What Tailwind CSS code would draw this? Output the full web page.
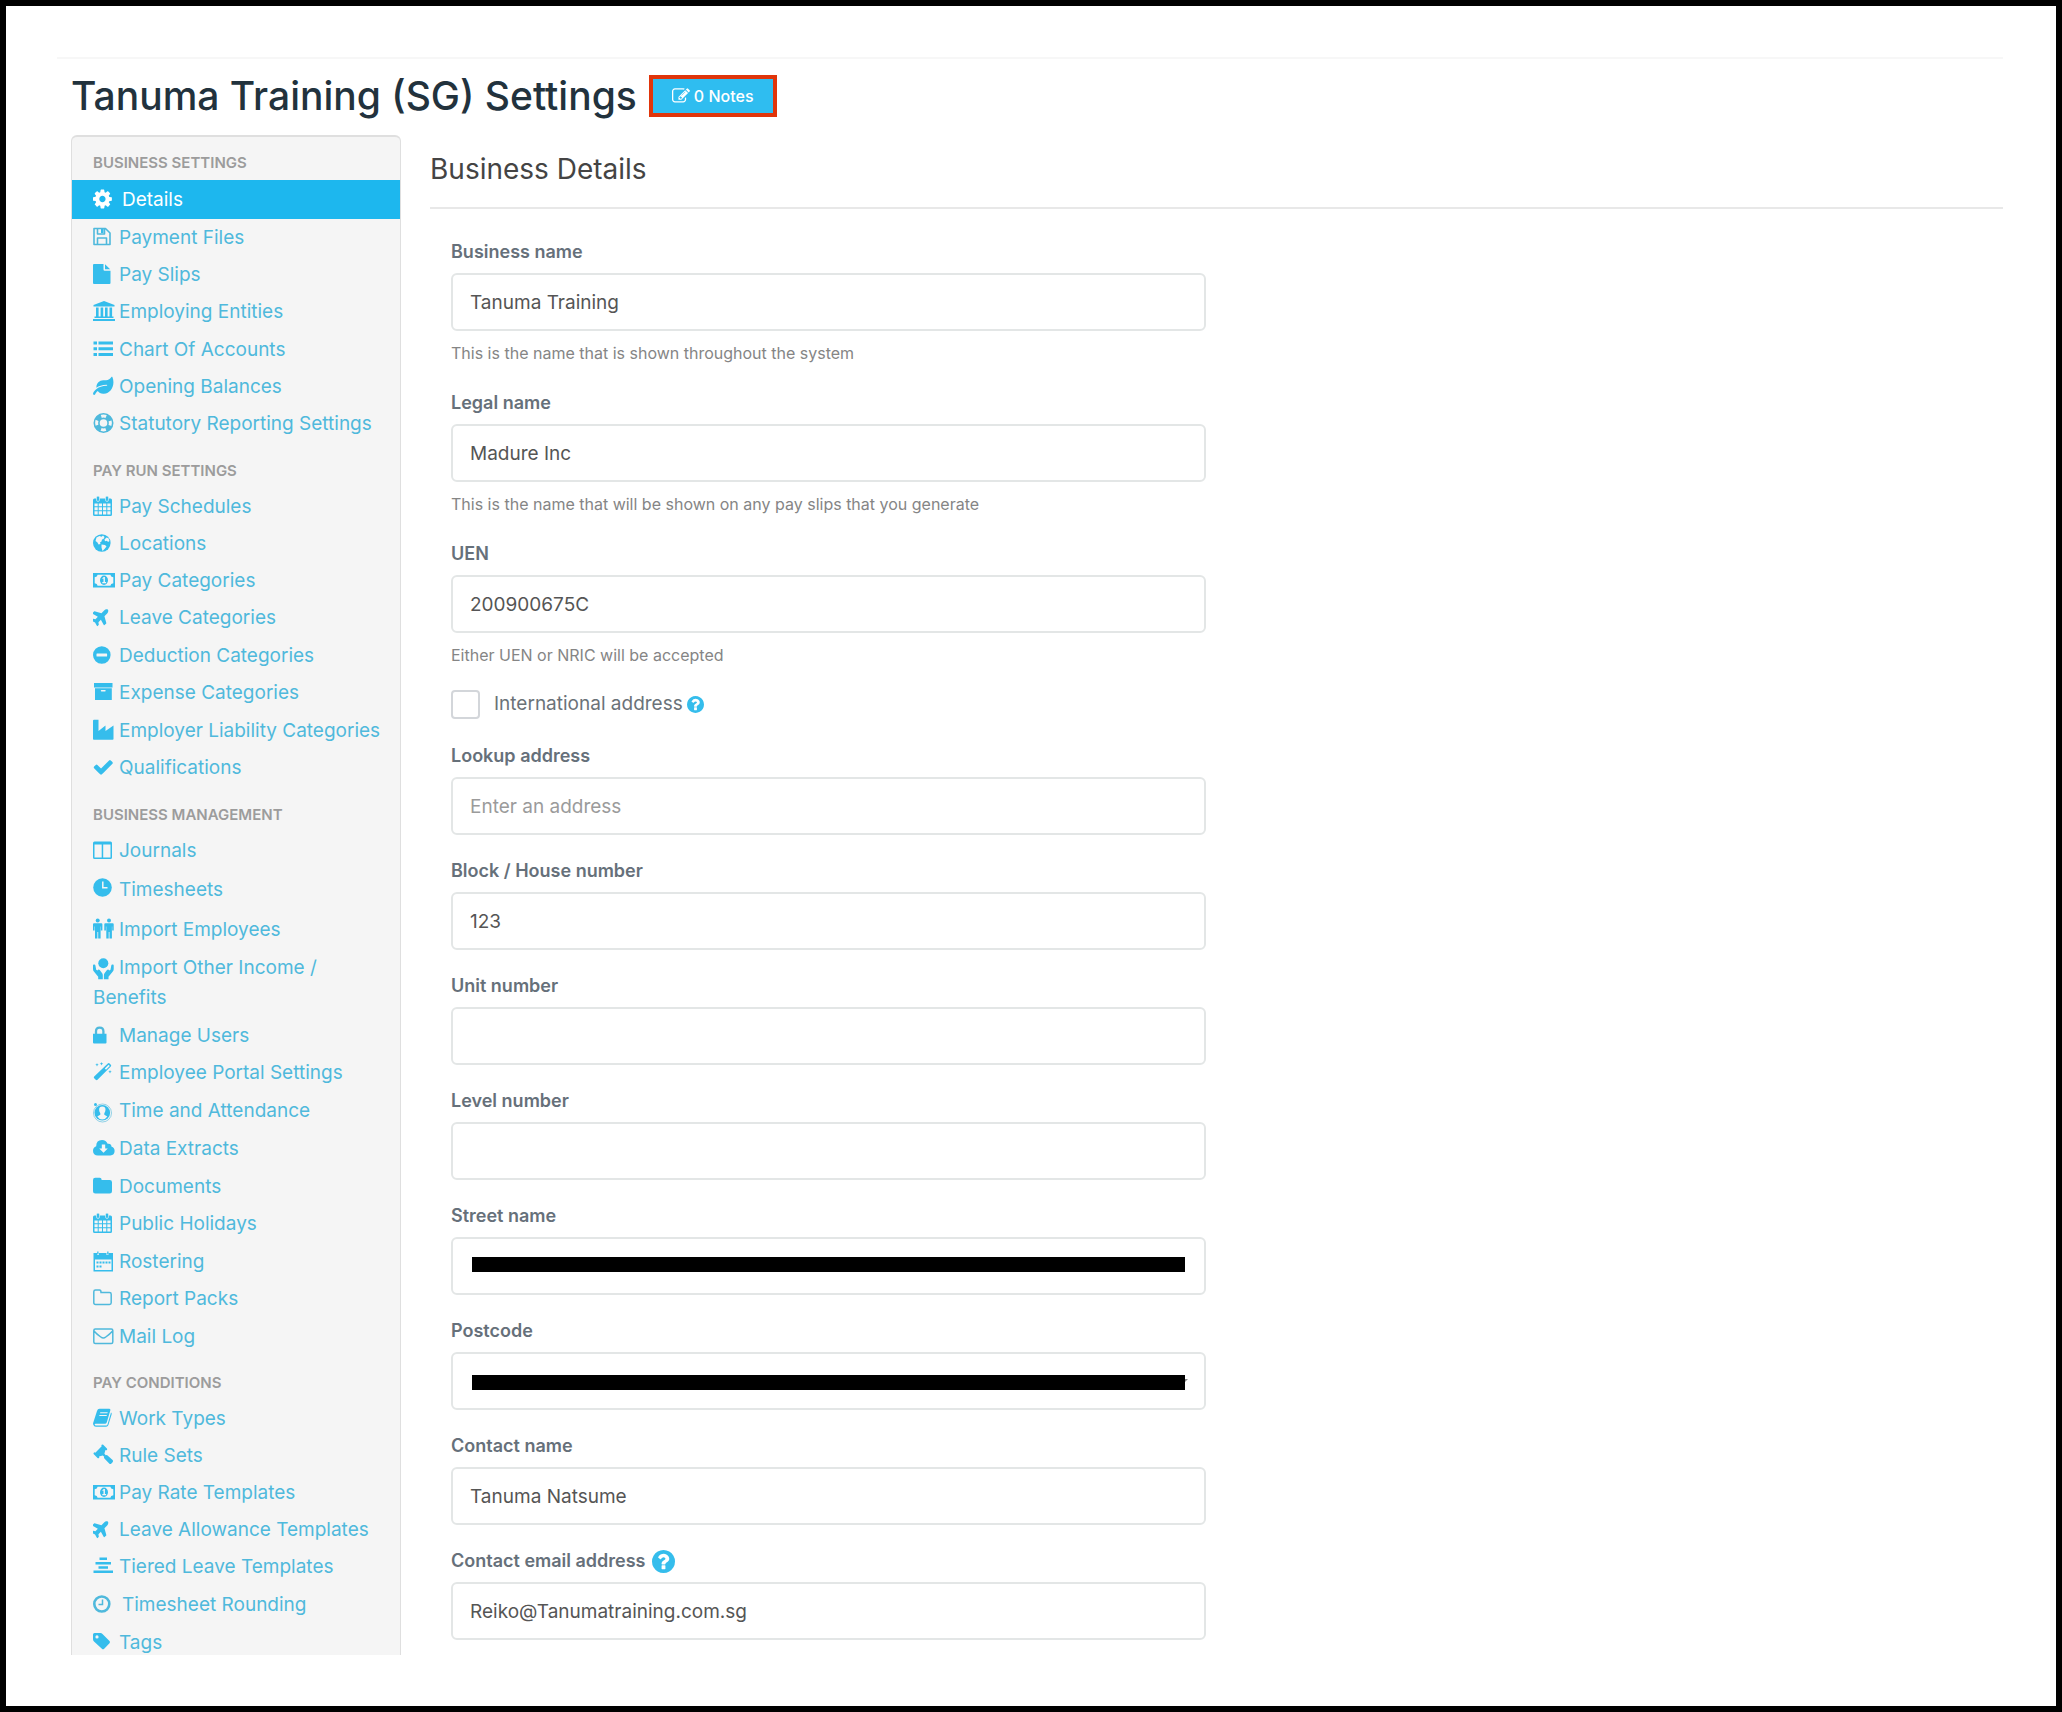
<!DOCTYPE html>
<html lang="en">
<head>
<meta charset="utf-8">
<meta name="viewport" content="width=device-width, initial-scale=1">
<title>Tanuma Training (SG) Settings</title>
<script src="https://cdn.jsdelivr.net/npm/@tailwindcss/browser@4"></script>
</head>
<body class="bg-white font-[Inter,sans-serif] text-[#555]">

<svg class="hidden" aria-hidden="true">
  <symbol id="cog" viewBox="128 0 1792 1792"><path d="M1152 896q0-106-75-181t-181-75-181 75-75 181 75 181 181 75 181-75 75-181zm512-109v222q0 12-8 23t-20 13l-185 28q-19 54-39 91 35 50 107 138 10 12 10 25t-9 23q-27 37-99 108t-94 71q-12 0-26-9l-138-108q-44 23-91 38-16 136-29 186-7 28-36 28h-222q-14 0-24.5-8.5t-11.5-21.5l-28-184q-49-16-90-37l-141 107q-10 9-25 9-14 0-25-11-126-114-165-168-7-10-7-23 0-12 8-23 15-21 51-66.5t54-70.5q-27-50-41-99l-183-27q-13-2-21-12.5t-8-23.5v-222q0-12 8-23t19-13l186-28q14-46 39-92-40-57-107-138-10-12-10-24 0-10 9-23 26-36 98.5-107.5t94.5-71.5q13 0 26 10l138 107q44-23 91-38 16-136 29-186 7-28 36-28h222q14 0 24.5 8.5t11.5 21.5l28 184q49 16 90 37l142-107q9-9 24-9 13 0 25 10 129 119 165 170 7 8 7 22 0 12-8 23-15 21-51 66.5t-54 70.5q26 50 41 98l183 28q13 2 21 12.5t8 23.5z"/></symbol>
  <symbol id="help" viewBox="128 128 1536 1536"><path d="M1024 1376v-192q0-14-9-23t-23-9h-192q-14 0-23 9t-9 23v192q0 14 9 23t23 9h192q14 0 23-9t9-23zm256-672q0-88-55.5-163t-138.5-116-170-41q-243 0-371 213-15 24 8 42l132 100q7 6 19 6 16 0 25-12 53-68 86-92 34-24 86-24 48 0 85.5 26t37.5 59q0 38-20 61t-68 45q-63 28-115.5 86.5t-52.5 125.5v36q0 14 9 23t23 9h192q14 0 23-9t9-23q0-19 21.5-49.5t54.5-49.5q32-18 49-28.5t46-35 44.5-48 28-60.5 12.5-81zm384 192q0 209-103 385.5t-279.5 279.5-385.5 103-385.5-103-279.5-279.5-103-385.5 103-385.5 279.5-279.5 385.5-103 385.5 103 279.5 279.5 103 385.5z"/></symbol>
  <symbol id="edit" viewBox="0 0 1792 1792"><path d="M888 1184l116-116-152-152-116 116v56h96v96h56zm440-720q-16-16-33 1l-350 350q-17 17-1 33t33-1l350-350q17-17 1-33zm80 594v190q0 119-84.5 203.5t-203.5 84.5h-832q-119 0-203.5-84.5t-84.5-203.5v-832q0-119 84.5-203.5t203.5-84.5h832q63 0 117 25 15 7 18 23 3 17-9 29l-49 49q-14 14-32 8-23-6-45-6h-832q-66 0-113 47t-47 113v832q0 66 47 113t113 47h832q66 0 113-47t47-113v-126q0-13 9-22l64-64q15-15 35-7t20 29zm-96-738l288 288-672 672h-288v-288zm444 132l-92 92-288-288 92-92q28-28 68-28t68 28l152 152q28 28 28 68t-28 68z"/></symbol>
  <symbol id="floppy" viewBox="0 0 22 22"><path fill="none" stroke="currentColor" stroke-width="1.6" stroke-linejoin="round" d="M1 2.500h11.500L17 7v11.500H1zM4.500 18.500v-6.500h9v6.500M4.500 2.500v5.500h7v-5.500"/><path d="M8 3h2.500v4H8z"/></symbol>
  <symbol id="file" viewBox="0 0 22 22"><path d="M1 1h9.500v5.500q0 1.200 1.200 1.200H17.500V20q0 1-1 1H1q-1 0-1-1V2q0-1 1-1zM12 1.300l5.200 5H12z"/></symbol>
  <symbol id="bank" viewBox="0 0 22 22"><path d="M11 1l10.500 4v1.400H.5V5zM3 7.500h2.600v9H3zM7.600 7.500h2.600v9H7.600zM12 7.500h2.600v9H12zM16.500 7.500h2.600v9h-2.600zM1.500 16.500h19v1.600h-19zM0 19h22v2H0z"/></symbol>
  <symbol id="list" viewBox="0 0 22 22"><path d="M.5 3.500H4v3H.5zM.5 9.200H4v3H.5zM.5 15H4v3H.5zM5.500 3.500H20v3H5.500zM5.500 9.200H20v3H5.500zM5.500 15H20v3H5.500z"/></symbol>
  <symbol id="leaf" viewBox="0 -50 620 620"><path d="M546.2 9.700c-5.600-12.500-21.600-13-28.300-1.200C486.900 62.400 431.400 96 368 96h-80C182 96 96 182 96 288c0 7 .8 13.700 1.500 20.500C161.300 262.800 253.400 224 384 224c8.800 0 16 7.200 16 16s-7.200 16-16 16C132.600 256 26 410.100 2.400 468c-6.600 16.300 1.200 34.900 17.500 41.600 16.400 6.800 35-1.100 41.800-17.300 1.500-3.600 20.900-47.900 71.900-90.600 32.400 43.900 94 85.800 174.900 77.200C465.500 467.500 576 326.700 576 154.300c0-50.200-10.800-102.200-29.800-144.600z"/></symbol>
  <symbol id="ring" viewBox="0 0 22 22"><g fill="none" stroke="currentColor"><circle cx="10.500" cy="11" r="9.200" stroke-width="1.600"/><circle cx="10.500" cy="11" r="4.600" stroke-width="1.600"/><circle cx="10.500" cy="11" r="7" stroke-width="4.500" stroke-dasharray="6 4.996" stroke-dashoffset="-2.500"/></g></symbol>
  <symbol id="calendar" viewBox="0 0 22 22"><path fill-rule="evenodd" d="M1.500 3.500h16q1.500 0 1.500 1.500v14.500q0 1.500-1.500 1.500h-16Q0 21 0 19.500V5Q0 3.500 1.500 3.500zM1.500 8.500v2.800h3.200V8.500zM5.700 8.500v2.800h3.300V8.500zM10 8.500v2.800h3.300V8.500zM14.300 8.500v2.800h3.200V8.500zM1.500 12.300v3h3.200v-3zM5.700 12.300v3h3.300v-3zM10 12.300v3h3.300v-3zM14.300 12.300v3h3.200v-3zM1.500 16.300v3.200h3.200v-3.200zM5.700 16.300v3.200h3.300v-3.200zM10 16.300v3.200h3.300v-3.200zM14.300 16.300v3.200h3.200v-3.200z"/><rect x="3.500" y="1" width="3" height="5.500" rx="1.500" stroke="#f5f5f5" stroke-width=".6"/><rect x="12.500" y="1" width="3" height="5.500" rx="1.500" stroke="#f5f5f5" stroke-width=".6"/></symbol>
  <symbol id="globe" viewBox="0 0 22 22"><circle cx="8.800" cy="11" r="8.800"/><path fill="#f5f5f5" d="M3.500 5.500l3-1.500 2 .8 1.500-1.300 1.500 1.500-1 2-1.500.5-.5 2-1.500 1 .5 1.500-2 .5-1-2-2-1.500zM11.500 7.500l2-2 2 .8 1 2.700-1.500 1-1-1.200-2 .5zM8.500 12.500l3.500.5 1.500 1.500-2 2.500-2 2-1-3.500z"/></symbol>
  <symbol id="money" viewBox="0 0 22 22"><path fill-rule="evenodd" d="M0 4h22v14.500H0zM4.600 5.800Q4.400 8 1.700 8.300v5.900q2.700.3 2.900 2.500h12.800q.2-2.200 2.900-2.500V8.300Q17.600 8 17.400 5.800z"/><ellipse cx="11" cy="11.200" rx="4" ry="4.700"/><path fill="#f5f5f5" d="M9.300 9.200L10.800 8h1.100v5h1.200v1.200H9.300V13h1.200V9.600l-.7.400z"/></symbol>
  <symbol id="plane" viewBox="0 0 22 22"><path transform="translate(8.100 10.500) rotate(-45) scale(.0335) translate(-288 -256)" d="M480 192H365.710L260.610 8.060A16.014 16.014 0 0 0 246.710 0h-65.500c-10.630 0-18.300 10.170-15.380 20.390L214.860 192H112l-43.200-57.600c-3.020-4.030-7.770-6.400-12.800-6.400H16.010C5.600 128-2.040 137.780.49 147.880L32 256 .49 364.120C-2.040 374.220 5.600 384 16.010 384H56c5.040 0 9.780-2.370 12.800-6.400L112 320h102.860l-49.030 171.600c-2.920 10.220 4.750 20.400 15.380 20.400h65.500c5.740 0 11.040-3.080 13.890-8.060L365.710 320H480c35.350 0 96-28.650 96-64s-60.650-64-96-64z"/></symbol>
  <symbol id="minus" viewBox="0 0 22 22"><path fill-rule="evenodd" d="M8.800 2.200a8.800 8.800 0 1 1 0 17.600 8.800 8.800 0 0 1 0-17.600zM4 9.500q-.5 0-.5.500v2q0 .5.500.5h9.600q.5 0 .5-.5v-2q0-.5-.5-.5z"/></symbol>
  <symbol id="archive" viewBox="0 0 22 22"><path fill-rule="evenodd" d="M1 2h18.500v4.500H1zM2 7.300h16.800V19H2zM8.500 9q-.7 0-.7.800t.7.800H12q.7 0 .7-.8T12 9z"/></symbol>
  <symbol id="industry" viewBox="0 0 22 22"><path d="M1 .8h4.500V12l7-5.500V12l8-5.500V20q0 .8-.8.800H.8Q0 20.800 0 20V1.800q0-1 1-1z"/></symbol>
  <symbol id="check" viewBox="60 0 1792 1792"><path d="M1671 566q0 40-28 68l-724 724-136 136q-28 28-68 28t-68-28l-136-136-362-362q-28-28-28-68t28-68l136-136q28-28 68-28t68 28l294 295 656-657q28-28 68-28t68 28l136 136q28 28 28 68z"/></symbol>
  <symbol id="columns" viewBox="0 0 22 22"><path fill-rule="evenodd" d="M1.500 2.500h16Q19 2.500 19 4v14.500q0 1.500-1.500 1.500h-16Q0 20 0 18.500V4q0-1.500 1.500-1.500zM1.500 5.500v13h7.200v-13zM10.200 5.500v13h7.300v-13z"/></symbol>
  <symbol id="clock" viewBox="0 0 22 22"><circle cx="9.500" cy="9.500" r="9.300"/><path fill="none" stroke="#f5f5f5" stroke-width="1.500" d="M9.800 3.500v6.300h4.700"/></symbol>
  <symbol id="people" viewBox="0 0 22 22"><circle cx="4.700" cy="2.600" r="2"/><path d="M1 5.200h7.400q1 0 1 1v6.300H7.900V8.500h-.3V20.500H5.200V14h-.8v6.500H2V8.500h-.4v4H0V6.200q0-1 1-1z"/><circle cx="16" cy="2.600" r="2"/><path d="M12.300 5.200h7.400q1 0 1 1v6.300h-1.500V8.500h-.3V20.500h-2.400V14h-.8v6.500h-2.400V8.500h-.4v4h-1.600V6.200q0-1 1-1z"/></symbol>
  <symbol id="hands" viewBox="0 0 22 22"><circle cx="10.300" cy="5.300" r="5"/><path d="M.8 6.500q1.400-.4 1.600 1l.8 4.300 1.300.8q.8-1.700 2.200-.6l2.300 3q.8 1 .8 2.200v4H5.200v-2.500L.9 13.500Q0 12.500 0 11V7.500q0-.8.800-1zM19.900 6.500q-1.400-.4-1.600 1l-.8 4.300-1.300.8q-.8-1.700-2.200-.6l-2.300 3q-.8 1-.8 2.200v4h4.600v-2.500l4.300-5.200q.9-1 .9-2.500V7.500q0-.8-.8-1z"/></symbol>
  <symbol id="lock" viewBox="0 0 22 22"><path d="M0 9.700h13.500v8.800q0 1-1 1H1q-1 0-1-1z"/><path fill="none" stroke="currentColor" stroke-width="2.300" d="M3 10V7.300q0-3.600 3.700-3.600t3.700 3.600V10"/></symbol>
  <symbol id="wand" viewBox="0 0 22 22"><path fill-rule="evenodd" d="M14.800 2.500q.9-.9 1.800 0l1.200 1.200q.9.900 0 1.800L4.500 18.800q-.9.900-1.800 0l-1.500-1.500q-.9-.9 0-1.800zM15.600 3.700l-3.800 3.800 1.200 1.200 3.800-3.800z"/><path d="M4 2l.5 1.200 1.200.5-1.200.5L4 5.400l-.5-1.200-1.200-.5 1.200-.5zM8.500 1l.5 1.300 1.300.5-1.300.5-.5 1.300-.5-1.300-1.300-.5 1.300-.5zM17 9l.5 1.200 1.200.5-1.200.5-.5 1.200-.5-1.200-1.200-.5 1.200-.5z"/></symbol>
  <symbol id="attend" viewBox="0 0 22 22"><circle cx="9.500" cy="12" r="9" fill="none" stroke="currentColor" stroke-width="1" opacity=".6"/><circle cx="9.300" cy="11.800" r="7.800"/><circle cx="2.500" cy="3.500" r="1.500"/><path fill="#f5f5f5" d="M9.300 5.500q3.200 0 3.200 3.300 0 2-1.200 3.400v1.600l3 1.700q-1.800 3-5 3t-5-3l3-1.700v-1.600Q6.100 10.800 6.100 8.800q0-3.300 3.200-3.300z"/></symbol>
  <symbol id="cloud" viewBox="0 0 22 22"><path fill-rule="evenodd" d="M5 18.500q-5-.3-5-4.800 0-3.200 3.200-4.500Q3.200 3 9 3q4.200 0 5.600 3.800 3.500-.8 4 3 3 .8 3 4.200 0 4.200-4.300 4.500zM8.800 7.500v4H6.200l4.300 4.300 4.300-4.300h-2.600v-4z"/></symbol>
  <symbol id="folder" viewBox="0 0 22 22"><path d="M2.200 2.800h4.600Q8.500 2.800 8.700 5h8q2.300 0 2.300 2.300v8.900q0 2.300-2.300 2.300H2.300Q0 18.500 0 16.200V5q0-2.200 2.200-2.200z"/></symbol>
  <symbol id="folder-o" viewBox="0 0 22 22"><path fill="none" stroke="currentColor" stroke-width="1.500" d="M2.500 3h4Q8 3 8 5.500h8.500q1.700 0 1.700 1.700v8.600q0 1.700-1.700 1.700h-14Q.8 17.500.8 15.800V4.700Q.8 3 2.500 3z"/></symbol>
  <symbol id="roster" viewBox="0 0 22 22"><path fill-rule="evenodd" d="M.5 3H4v2h2V3h7.500v2h2V3H20v18.500H.5zM2 9.500V20h16.500V9.500z"/><path d="M4.200 1.500h1.300v3H4.200zM14.200 1.500h1.300v3h-1.300zM6.500 11.500h2v2h-2zM9.500 11.500h2v2h-2zM12.500 11.500h2v2h-2zM15.500 11.500h2v2h-2zM3.500 15.500h2v2h-2zM6.500 15.500h2v2h-2zM3.500 11.500h2v2h-2z"/></symbol>
  <symbol id="mail" viewBox="0 0 22 22"><path fill="none" stroke="currentColor" stroke-width="1.500" d="M2.300 4h16q1.500 0 1.500 1.500V17q0 1.500-1.500 1.500h-16Q.8 18.500.8 17V5.500Q.8 4 2.300 4zM1 6q2.500 3 6.800 6 2.500 2 5 0 4.200-3 6.800-6"/></symbol>
  <symbol id="book" viewBox="0 0 22 22"><path fill-rule="evenodd" d="M6.500 1.800h9.600q1.600 0 1.200 1.600l-3.500 11.800q-.5 1.500-2 1.500H2.500q-1 0-.7 1t1.400.8h10q1 0 1.300-1L18 5.500q1 .5.600 2L15.400 18q-.6 1.700-2.300 1.700H3Q.8 19.700.2 17.500q-.3-1 .1-2L4 4q.6-2.200 2.500-2.200zM7.300 5.200L7 6.300h7.400l.3-1.100zM6.500 8l-.3 1.100h7.400l.3-1.100z"/></symbol>
  <symbol id="gavel" viewBox="0 0 22 22"><path d="M8.700.8q.8-.7 1.500 0l3.700 3.700q.7.800 0 1.500-.8.700-1.500 0l-1 3.800 1.400 1.400q1-.6 1.800.2l5 4.600q1 1 0 2.200l-1.200 1.400q-1 1-2.200 0l-4.800-5q-.8-.9-.2-1.800L9.800 11.400 6 12.400q.7.800 0 1.500-.8.700-1.500 0L.8 10.200q-.7-.8 0-1.500.8-.7 1.500 0L8.700 2.300q-.7-.7 0-1.500z"/></symbol>
  <symbol id="tiers" viewBox="0 0 22 22"><path d="M6.500 2.500H14v2.500H6.500zM2.500 7h15.500v2.500H2.500zM5.500 11.300h9.500v2.500H5.500zM.5 15.600H20V18H.5z"/></symbol>
  <symbol id="clock-o" viewBox="0 0 22 22"><circle cx="8.800" cy="11" r="7.500" fill="none" stroke="currentColor" stroke-width="2.600"/><path fill="none" stroke="currentColor" stroke-width="1.500" d="M9.500 6.500v5h-4"/></symbol>
  <symbol id="tag" viewBox="0 0 22 22"><path fill-rule="evenodd" d="M1.500 2H7.500q1 0 2 1l7 7q1 1 0 2.200l-5.300 5.500q-1.200 1-2.300 0L1 10.500Q0 9.500 0 8.300V3.500Q0 2 1.500 2zM4 4.300a1.600 1.600 0 1 0 0 3.200 1.600 1.600 0 0 0 0-3.200z"/></symbol>
</svg>

<div class="min-h-screen border-[6px] border-black py-[51px] pr-[53px] pl-[51px]">
  <div class="border-t-2 border-[#f7f7f7]"></div>
  <header class="flex items-center gap-3 pt-3 pl-[14px]">
    <h1 class="text-[39px] leading-[50px] font-medium text-[#22323d]">Tanuma Training (SG) Settings</h1>
    <button type="button" class="flex h-[42px] items-center gap-1 border-4 border-[#e0350b] bg-[#2fbdf0] px-[19px] text-[16px] font-medium text-white">
      <svg class="size-[18px] fill-current" aria-hidden="true"><use href="#edit"/></svg>0 Notes
    </button>
  </header>

  <div class="flex items-start gap-[29px] pt-[14px] pl-[14px]">
    <aside class="w-[330px] shrink-0 rounded-t-md border-x border-t-2 border-[#dfdfdf] bg-[#f5f5f5] text-[19px] text-[#4fb9dc]">
      <nav aria-label="Settings">
        <h2 class="h-[43px] pt-[9px] pl-[21px] text-[15px] leading-[34px] font-semibold text-[#9c9c9c]">BUSINESS SETTINGS</h2>
        <ul>
          <li class="h-[39px] bg-[#1db7ee] leading-[39px] text-white"><a href="#" class="block pr-5 pl-[21px]"><svg class="mr-[7px] inline-block size-[22px] fill-current align-[-4px]" aria-hidden="true"><use href="#cog"/></svg>Details</a></li>
          <li class="h-[37px] leading-[37px]"><a href="#" class="block pr-5 pl-[21px]"><svg class="mr-1 inline-block size-[22px] fill-[#35bdec] align-[-4px]" aria-hidden="true"><use href="#floppy"/></svg>Payment Files</a></li>
          <li class="h-[37px] leading-[37px]"><a href="#" class="block pr-5 pl-[21px]"><svg class="mr-1 inline-block size-[22px] fill-[#35bdec] align-[-4px]" aria-hidden="true"><use href="#file"/></svg>Pay Slips</a></li>
          <li class="h-[38px] leading-[38px]"><a href="#" class="block pr-5 pl-[21px]"><svg class="mr-1 inline-block size-[22px] fill-[#35bdec] align-[-4px]" aria-hidden="true"><use href="#bank"/></svg>Employing Entities</a></li>
          <li class="h-[37px] leading-[37px]"><a href="#" class="block pr-5 pl-[21px]"><svg class="mr-1 inline-block size-[22px] fill-[#35bdec] align-[-4px]" aria-hidden="true"><use href="#list"/></svg>Chart Of Accounts</a></li>
          <li class="h-[37px] leading-[37px]"><a href="#" class="block pr-5 pl-[21px]"><svg class="mr-1 inline-block size-[22px] fill-[#35bdec] align-[-4px]" aria-hidden="true"><use href="#leaf"/></svg>Opening Balances</a></li>
          <li class="h-[38px] leading-[38px]"><a href="#" class="block pr-5 pl-[21px]"><svg class="mr-1 inline-block size-[22px] fill-[#35bdec] align-[-4px]" aria-hidden="true"><use href="#ring"/></svg>Statutory Reporting Settings</a></li>
        </ul>
        <h2 class="h-[45px] pt-[11px] pl-[21px] text-[15px] leading-[34px] font-semibold text-[#9c9c9c]">PAY RUN SETTINGS</h2>
        <ul>
          <li class="h-[37px] leading-[37px]"><a href="#" class="block pr-5 pl-[21px]"><svg class="mr-1 inline-block size-[22px] fill-[#35bdec] align-[-4px]" aria-hidden="true"><use href="#calendar"/></svg>Pay Schedules</a></li>
          <li class="h-[37px] leading-[37px]"><a href="#" class="block pr-5 pl-[21px]"><svg class="mr-1 inline-block size-[22px] fill-[#35bdec] align-[-4px]" aria-hidden="true"><use href="#globe"/></svg>Locations</a></li>
          <li class="h-[37px] leading-[37px]"><a href="#" class="block pr-5 pl-[21px]"><svg class="mr-1 inline-block size-[22px] fill-[#35bdec] align-[-4px]" aria-hidden="true"><use href="#money"/></svg>Pay Categories</a></li>
          <li class="h-[38px] leading-[38px]"><a href="#" class="block pr-5 pl-[21px]"><svg class="mr-1 inline-block size-[22px] fill-[#35bdec] align-[-4px]" aria-hidden="true"><use href="#plane"/></svg>Leave Categories</a></li>
          <li class="h-[37px] leading-[37px]"><a href="#" class="block pr-5 pl-[21px]"><svg class="mr-1 inline-block size-[22px] fill-[#35bdec] align-[-4px]" aria-hidden="true"><use href="#minus"/></svg>Deduction Categories</a></li>
          <li class="h-[38px] leading-[38px]"><a href="#" class="block pr-5 pl-[21px]"><svg class="mr-1 inline-block size-[22px] fill-[#35bdec] align-[-4px]" aria-hidden="true"><use href="#archive"/></svg>Expense Categories</a></li>
          <li class="h-[37px] leading-[37px]"><a href="#" class="block pl-[21px]"><svg class="mr-1 inline-block size-[22px] fill-[#35bdec] align-[-4px]" aria-hidden="true"><use href="#industry"/></svg>Employer Liability Categories</a></li>
          <li class="h-[38px] leading-[38px]"><a href="#" class="block pr-5 pl-[21px]"><svg class="mr-1 inline-block size-[22px] fill-[#35bdec] align-[-4px]" aria-hidden="true"><use href="#check"/></svg>Qualifications</a></li>
        </ul>
        <h2 class="h-[45px] pt-[11px] pl-[21px] text-[15px] leading-[34px] font-semibold text-[#9c9c9c]">BUSINESS MANAGEMENT</h2>
        <ul>
          <li class="h-[37px] leading-[37px]"><a href="#" class="block pr-5 pl-[21px]"><svg class="mr-1 inline-block size-[22px] fill-[#35bdec] align-[-4px]" aria-hidden="true"><use href="#columns"/></svg>Journals</a></li>
          <li class="h-[42px] leading-[42px]"><a href="#" class="block pr-5 pl-[21px]"><svg class="mr-1 inline-block size-[22px] fill-[#35bdec] align-[-4px]" aria-hidden="true"><use href="#clock"/></svg>Timesheets</a></li>
          <li class="h-[38px] leading-[38px]"><a href="#" class="block pr-5 pl-[21px]"><svg class="mr-1 inline-block size-[22px] fill-[#35bdec] align-[-4px]" aria-hidden="true"><use href="#people"/></svg>Import Employees</a></li>
          <li class="py-1 leading-[30px]"><a href="#" class="block pr-5 pl-[21px]"><svg class="mr-1 inline-block size-[22px] fill-[#35bdec] align-[-6px]" aria-hidden="true"><use href="#hands"/></svg>Import Other Income / Benefits</a></li>
          <li class="h-[37px] leading-[37px]"><a href="#" class="block pr-5 pl-[21px]"><svg class="mr-1 inline-block size-[22px] fill-[#35bdec] align-[-4px]" aria-hidden="true"><use href="#lock"/></svg>Manage Users</a></li>
          <li class="h-[38px] leading-[38px]"><a href="#" class="block pr-5 pl-[21px]"><svg class="mr-1 inline-block size-[22px] fill-[#35bdec] align-[-4px]" aria-hidden="true"><use href="#wand"/></svg>Employee Portal Settings</a></li>
          <li class="h-[38px] leading-[38px]"><a href="#" class="block pr-5 pl-[21px]"><svg class="mr-1 inline-block size-[22px] fill-[#35bdec] align-[-6px]" aria-hidden="true"><use href="#attend"/></svg>Time and Attendance</a></li>
          <li class="h-[38px] leading-[38px]"><a href="#" class="block pr-5 pl-[21px]"><svg class="mr-1 inline-block size-[22px] fill-[#35bdec] align-[-4px]" aria-hidden="true"><use href="#cloud"/></svg>Data Extracts</a></li>
          <li class="h-[37px] leading-[37px]"><a href="#" class="block pr-5 pl-[21px]"><svg class="mr-1 inline-block size-[22px] fill-[#35bdec] align-[-4px]" aria-hidden="true"><use href="#folder"/></svg>Documents</a></li>
          <li class="h-[38px] leading-[38px]"><a href="#" class="block pr-5 pl-[21px]"><svg class="mr-1 inline-block size-[22px] fill-[#35bdec] align-[-4px]" aria-hidden="true"><use href="#calendar"/></svg>Public Holidays</a></li>
          <li class="h-[37px] leading-[37px]"><a href="#" class="block pr-5 pl-[21px]"><svg class="mr-1 inline-block size-[22px] fill-[#35bdec] align-[-4px]" aria-hidden="true"><use href="#roster"/></svg>Rostering</a></li>
          <li class="h-[38px] leading-[38px]"><a href="#" class="block pr-5 pl-[21px]"><svg class="mr-1 inline-block size-[22px] fill-[#35bdec] align-[-4px]" aria-hidden="true"><use href="#folder-o"/></svg>Report Packs</a></li>
          <li class="h-[37px] leading-[37px]"><a href="#" class="block pr-5 pl-[21px]"><svg class="mr-1 inline-block size-[22px] fill-[#35bdec] align-[-4px]" aria-hidden="true"><use href="#mail"/></svg>Mail Log</a></li>
        </ul>
        <h2 class="h-[45px] pt-[11px] pl-[21px] text-[15px] leading-[34px] font-semibold text-[#9c9c9c]">PAY CONDITIONS</h2>
        <ul>
          <li class="h-[37px] leading-[37px]"><a href="#" class="block pr-5 pl-[21px]"><svg class="mr-1 inline-block size-[22px] fill-[#35bdec] align-[-4px]" aria-hidden="true"><use href="#book"/></svg>Work Types</a></li>
          <li class="h-[37px] leading-[37px]"><a href="#" class="block pr-5 pl-[21px]"><svg class="mr-1 inline-block size-[22px] fill-[#35bdec] align-[-4px]" aria-hidden="true"><use href="#gavel"/></svg>Rule Sets</a></li>
          <li class="h-[37px] leading-[37px]"><a href="#" class="block pr-5 pl-[21px]"><svg class="mr-1 inline-block size-[22px] fill-[#35bdec] align-[-4px]" aria-hidden="true"><use href="#money"/></svg>Pay Rate Templates</a></li>
          <li class="h-[37px] leading-[37px]"><a href="#" class="block pl-[21px]"><svg class="mr-1 inline-block size-[22px] fill-[#35bdec] align-[-4px]" aria-hidden="true"><use href="#plane"/></svg>Leave Allowance Templates</a></li>
          <li class="h-[38px] leading-[38px]"><a href="#" class="block pr-5 pl-[21px]"><svg class="mr-1 inline-block size-[22px] fill-[#35bdec] align-[-4px]" aria-hidden="true"><use href="#tiers"/></svg>Tiered Leave Templates</a></li>
          <li class="h-[38px] leading-[38px]"><a href="#" class="block pr-5 pl-[21px]"><svg class="mr-[7px] inline-block size-[22px] fill-[#35bdec] align-[-4px]" aria-hidden="true"><use href="#clock-o"/></svg>Timesheet Rounding</a></li>
          <li class="h-[31px] overflow-hidden leading-[37px]"><a href="#" class="block pr-5 pl-[21px]"><svg class="mr-1 inline-block size-[22px] fill-[#35bdec] align-[-4px]" aria-hidden="true"><use href="#tag"/></svg>Tags</a></li>
        </ul>
      </nav>
    </aside>

    <main class="grow">
      <h2 class="border-b-2 border-[#e8e8e8] pt-[14px] pb-[18px] text-[28px] leading-10 text-[#444]">Business Details</h2>
      <form class="grid grid-cols-2 pt-[27px]">
        <div class="flex flex-col gap-5 pr-[11px] pl-[21px] text-[19px]">
          <div>
            <label for="name" class="mb-[5px] block text-[18px] leading-8 font-semibold text-[#66707a]">Business name</label>
            <input id="name" type="text" value="Tanuma Training" class="block h-[58px] w-full rounded-md border-2 border-[#e3e6e6] px-[17px]">
            <p class="mt-2 text-[16px] leading-7 text-[#858585]">This is the name that is shown throughout the system</p>
          </div>
          <div>
            <label for="legal" class="mb-[5px] block text-[18px] leading-8 font-semibold text-[#66707a]">Legal name</label>
            <input id="legal" type="text" value="Madure Inc" class="block h-[58px] w-full rounded-md border-2 border-[#e3e6e6] px-[17px]">
            <p class="mt-2 text-[16px] leading-7 text-[#858585]">This is the name that will be shown on any pay slips that you generate</p>
          </div>
          <div>
            <label for="uen" class="mb-[5px] block text-[18px] leading-8 font-semibold text-[#66707a]">UEN</label>
            <input id="uen" type="text" value="200900675C" class="block h-[58px] w-full rounded-md border-2 border-[#e3e6e6] px-[17px]">
            <p class="mt-2 text-[16px] leading-7 text-[#858585]">Either UEN or NRIC will be accepted</p>
          </div>
          <div class="flex h-[31px] items-center text-[#6b7278]">
            <input id="intl" type="checkbox" class="mr-[14px] size-[29px] appearance-none rounded-sm border-2 border-[#d3d6da]">
            <label for="intl">International address</label>
            <svg class="ml-1 size-[17px] fill-[#35bdec]" aria-hidden="true"><use href="#help"/></svg>
          </div>
          <div>
            <label for="lookup" class="mb-[5px] block text-[18px] leading-8 font-semibold text-[#66707a]">Lookup address</label>
            <input id="lookup" type="text" placeholder="Enter an address" class="block h-[58px] w-full rounded-md border-2 border-[#e3e6e6] px-[17px] placeholder:text-[#9b9b9b]">
          </div>
          <div>
            <label for="block" class="mb-[5px] block text-[18px] leading-8 font-semibold text-[#66707a]">Block / House number</label>
            <input id="block" type="text" value="123" class="block h-[58px] w-full rounded-md border-2 border-[#e3e6e6] px-[17px]">
          </div>
          <div>
            <label for="unit" class="mb-[5px] block text-[18px] leading-8 font-semibold text-[#66707a]">Unit number</label>
            <input id="unit" type="text" class="block h-[58px] w-full rounded-md border-2 border-[#e3e6e6] px-[17px]">
          </div>
          <div>
            <label for="level" class="mb-[5px] block text-[18px] leading-8 font-semibold text-[#66707a]">Level number</label>
            <input id="level" type="text" class="block h-[58px] w-full rounded-md border-2 border-[#e3e6e6] px-[17px]">
          </div>
          <div>
            <label for="street" class="mb-[5px] block text-[18px] leading-8 font-semibold text-[#66707a]">Street name</label>
            <div class="relative">
              <input id="street" type="text" class="block h-[58px] w-full rounded-md border-2 border-[#e3e6e6] px-[17px]">
              <div class="absolute inset-x-[21px] top-5 h-[15px] bg-black"></div>
            </div>
          </div>
          <div>
            <label for="postcode" class="mb-[5px] block text-[18px] leading-8 font-semibold text-[#66707a]">Postcode</label>
            <div class="relative">
              <select id="postcode" class="block h-[58px] w-full appearance-none rounded-md border-2 border-[#e3e6e6] px-[17px]"><option></option></select>
              <svg class="absolute top-[27px] right-[18px] h-[5px] w-[10px] fill-[#888]" viewBox="0 0 10 5" aria-hidden="true"><path d="M0 0h10L5 5z"/></svg>
              <div class="absolute inset-x-[21px] top-[23px] h-[15px] bg-black"></div>
            </div>
          </div>
          <div>
            <label for="contact" class="mb-[5px] block text-[18px] leading-8 font-semibold text-[#66707a]">Contact name</label>
            <input id="contact" type="text" value="Tanuma Natsume" class="block h-[58px] w-full rounded-md border-2 border-[#e3e6e6] px-[17px]">
          </div>
          <div>
            <div class="mb-[5px] flex items-center gap-[6px]">
              <label for="email" class="text-[18px] leading-8 font-semibold text-[#66707a]">Contact email address</label>
              <svg class="size-[23px] fill-[#35bdec]" aria-hidden="true"><use href="#help"/></svg>
            </div>
            <input id="email" type="email" value="Reiko@Tanumatraining.com.sg" class="block h-[58px] w-full rounded-md border-2 border-[#e3e6e6] px-[17px]">
          </div>
        </div>
      </form>
    </main>
  </div>
</div>
</body>
</html>
